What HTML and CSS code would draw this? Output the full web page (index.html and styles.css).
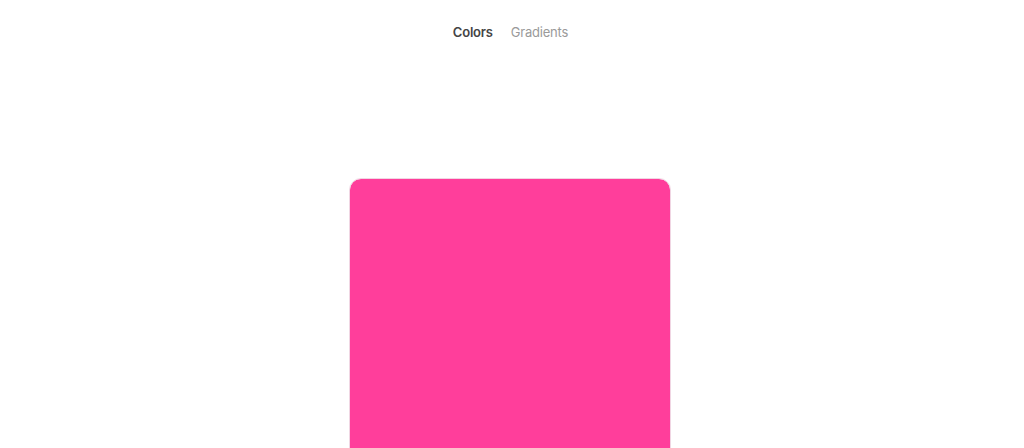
FILE: index.html
```html
<!DOCTYPE html>
<html>
<head>
<meta charset="utf-8">
<link rel="stylesheet" href="styles.css">
</head>
<body>
<div class="page">
  <nav class="tabs">
    <span class="tab active">Colors</span>
    <span class="tab">Gradients</span>
  </nav>
  <div class="card"></div>
</div>
</body>
</html>
```

FILE: styles.css
```css
html, body {
  margin: 0;
  padding: 0;
  background: #ffffff;
  overflow: hidden;
}
.page {
  width: 1019px;
  display: flex;
  flex-direction: column;
  align-items: center;
  font-family: Inter, "Noto Sans", sans-serif;
}
.tabs {
  display: flex;
  gap: 18px;
  padding-top: 22px;
  height: 20px;
  padding-left: 2px;
}
.tab {
  font-size: 13px;
  line-height: 20px;
  color: #9a9a9a;
  letter-spacing: -0.2px;
}
.tab.active {
  color: #444444;
  font-weight: 600;
}
.card {
  margin-top: 136px;
  width: 322px;
  height: 400px;
  box-sizing: border-box;
  border: 1px solid #f0d6e3;
  border-radius: 12px;
  background: #ff3e9b;
  background-clip: padding-box;
}
```
